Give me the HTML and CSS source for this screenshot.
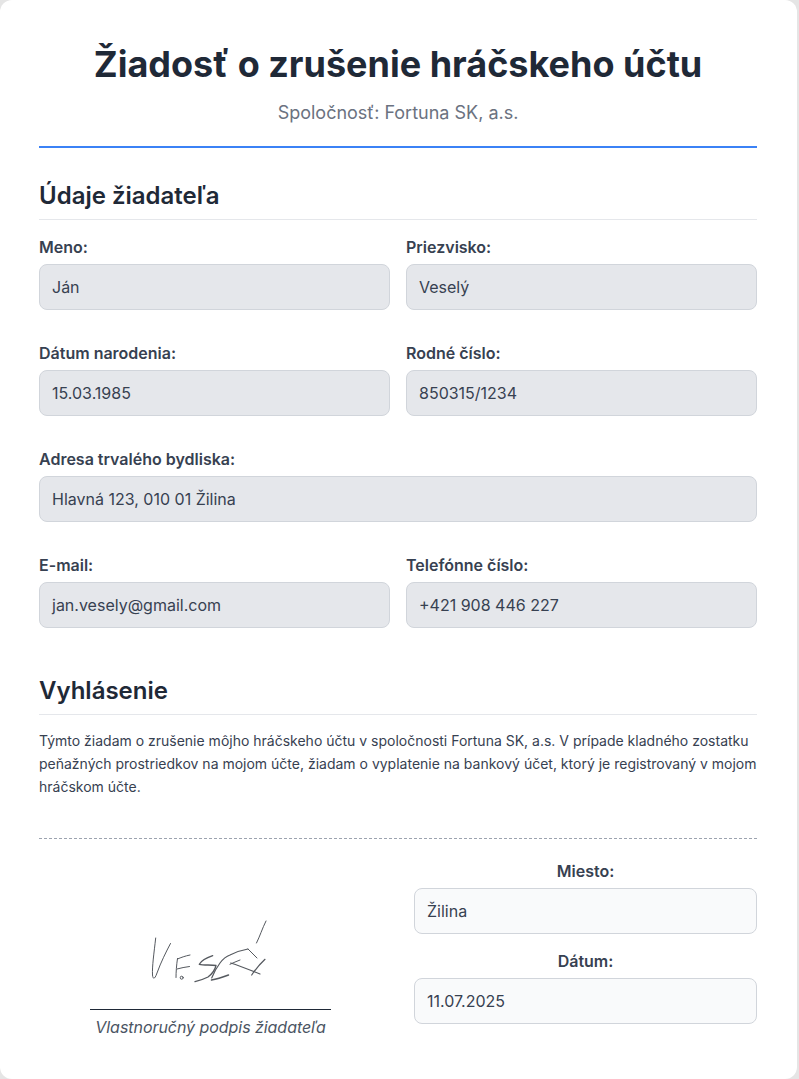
FILE: index.html
```html
<!DOCTYPE html>
<html lang="sk">
  <head>
    <meta charset="UTF-8"/>
    <title>Žiadosť o zrušenie hráčskeho účtu</title>
    <link rel="stylesheet" href="styles.css">
  </head>
  <body>
    <main class="card">
      <header class="pageHeader">
        <h1 class="pageHeader_title">Žiadosť o zrušenie hráčskeho účtu</h1>
        <p class="pageHeader_company">Spoločnosť: Fortuna SK, a.s.</p>
      </header>

      <section>
        <h2 class="sectionTitle">Údaje žiadateľa</h2>
        <div class="formGrid">
          <div class="field">
            <p class="field_label">Meno:</p>
            <div class="field_value">Ján</div>
          </div>
          <div class="field">
            <p class="field_label">Priezvisko:</p>
            <div class="field_value">Veselý</div>
          </div>
          <div class="field">
            <p class="field_label">Dátum narodenia:</p>
            <div class="field_value">15.03.1985</div>
          </div>
          <div class="field">
            <p class="field_label">Rodné číslo:</p>
            <div class="field_value">850315/1234</div>
          </div>
          <div class="field field_wide">
            <p class="field_label">Adresa trvalého bydliska:</p>
            <div class="field_value">Hlavná 123, 010 01 Žilina</div>
          </div>
          <div class="field">
            <p class="field_label">E-mail:</p>
            <div class="field_value">jan.vesely@gmail.com</div>
          </div>
          <div class="field">
            <p class="field_label">Telefónne číslo:</p>
            <div class="field_value">+421 908 446 227</div>
          </div>
        </div>
      </section>

      <section class="declarationSection">
        <h2 class="sectionTitle">Vyhlásenie</h2>
        <p class="declaration">Týmto žiadam o zrušenie môjho hráčskeho účtu v spoločnosti Fortuna SK, a.s. V prípade kladného zostatku peňažných prostriedkov na mojom účte, žiadam o vyplatenie na bankový účet, ktorý je registrovaný v mojom hráčskom účte.</p>
      </section>

      <footer class="signing">
        <div class="signature">
          <div class="signature_area">
            <svg class="signature_image" viewBox="0 0 135 75" width="135" height="75" fill="none" stroke="#55595f" stroke-width="1" stroke-linecap="round" stroke-linejoin="round" aria-hidden="true">
              <path d="M15.700 23 C14 38 12 52 12.500 60 C13 65 15 64 17 58 C21 47 26 37 30.500 28.500"/>
              <path d="M37.500 43.500 C36.500 50 36 57 36 62.500"/>
              <path d="M37.500 44 C41 42.500 45 41 50 40"/>
              <path d="M37 54 C41 53 45 52 49.500 51.500"/>
              <circle cx="41.700" cy="62.700" r="1.500"/>
              <path d="M72.700 40.700 C66 43 61 46 59.300 49.300 C64 50.500 71 49.500 76 50.500 C75 55 72 59 68 62 C63 64.500 58 66 55 66.700" stroke-width="1.300"/>
              <path d="M71.500 65 C77 64 83 62 88.500 60" stroke-width="1.500"/>
              <path d="M71.700 63 C74 57 77 52 80 48 C83 44 87 41 90 40 C96 37 102 35 108 34" stroke-width="1.200"/>
              <path d="M108 34 C111 37 114 40 117 43"/>
              <path d="M90.700 48 C100 51 110 55 120 59" stroke-width="1.200"/>
              <path d="M90 49.300 C93 48 97 46 100 45"/>
              <path d="M125 44.300 C120 49 115 55 111.700 60" stroke-width="1.200"/>
              <path d="M126 6 C122 14 120 21 116.500 28"/>
            </svg>
          </div>
          <div class="signature_line"></div>
          <p class="signature_caption">Vlastnoručný podpis žiadateľa</p>
        </div>
        <div class="signing_fields">
          <div class="signing_field">
            <p class="field_label">Miesto:</p>
            <div class="field_value field_value_light">Žilina</div>
          </div>
          <div class="signing_field">
            <p class="field_label">Dátum:</p>
            <div class="field_value field_value_light">11.07.2025</div>
          </div>
        </div>
      </footer>
    </main>
  </body>
</html>
```

FILE: styles.css
```css
* {
  box-sizing: border-box;
}
html, body {
  margin: 0;
  padding: 0;
}
body {
  height: 1079px;
  overflow: hidden;
  background-color: #e5e5e5;
  font-family: "Inter", "Liberation Sans", sans-serif;
  color: #1f2937;
}
p, h1, h2 {
  margin: 0;
}

.card {
  width: 797px;
  height: 1079px;
  padding: 0 40px 0 39px;
  background-color: #ffffff;
  border-radius: 12px;
}

.pageHeader {
  padding-top: 40px;
  padding-bottom: 19px;
  border-bottom: 2px solid #3b82f6;
  text-align: center;
}
.pageHeader_title {
  font-size: 36px;
  line-height: 48px;
  font-weight: 700;
  color: #1f2937;
}
.pageHeader_company {
  margin-top: 11px;
  font-size: 18px;
  line-height: 28px;
  color: #6b7280;
}

.sectionTitle {
  margin-top: 32px;
  padding-bottom: 7px;
  border-bottom: 1px solid #e5e7eb;
  font-size: 24px;
  line-height: 32px;
  font-weight: 600;
  color: #1f2937;
}

.formGrid {
  display: grid;
  grid-template-columns: 1fr 1fr;
  column-gap: 16px;
  row-gap: 31px;
  margin-top: 15px;
}
.field_wide {
  grid-column: 1 / 3;
}
.field_label {
  margin-bottom: 5px;
  font-size: 16px;
  line-height: 24px;
  font-weight: 600;
  color: #374151;
}
.field_value {
  height: 46px;
  padding: 0 12px;
  display: flex;
  align-items: center;
  background-color: #e5e7eb;
  border: 1px solid #d1d5db;
  border-radius: 8px;
  font-size: 16px;
  color: #374151;
}
.field_value_light {
  background-color: #f9fafb;
}

.declarationSection .sectionTitle {
  margin-top: 47px;
}
.declaration {
  margin-top: 15px;
  font-size: 14px;
  line-height: 22.750px;
  color: #374151;
}

.signing {
  display: grid;
  grid-template-columns: 1fr 1fr;
  column-gap: 32px;
  margin-top: 40px;
  padding-top: 20px;
  border-top: 1px dashed #9ca3af;
}
.signature {
  display: flex;
  flex-direction: column;
  align-items: center;
}
.signature_area {
  height: 150px;
  display: flex;
  align-items: flex-end;
  justify-content: center;
}
.signature_image {
  margin-right: 6px;
  margin-bottom: 19px;
}
.signature_line {
  width: 70%;
  border-top: 1px solid #1f2937;
}
.signature_caption {
  margin-top: 7px;
  font-size: 16px;
  line-height: 20px;
  letter-spacing: -0.05px;
  font-style: italic;
  color: #4b5563;
}
.signing_fields {
  display: flex;
  flex-direction: column;
  gap: 15px;
}
.signing_field .field_label {
  text-align: center;
}
```
